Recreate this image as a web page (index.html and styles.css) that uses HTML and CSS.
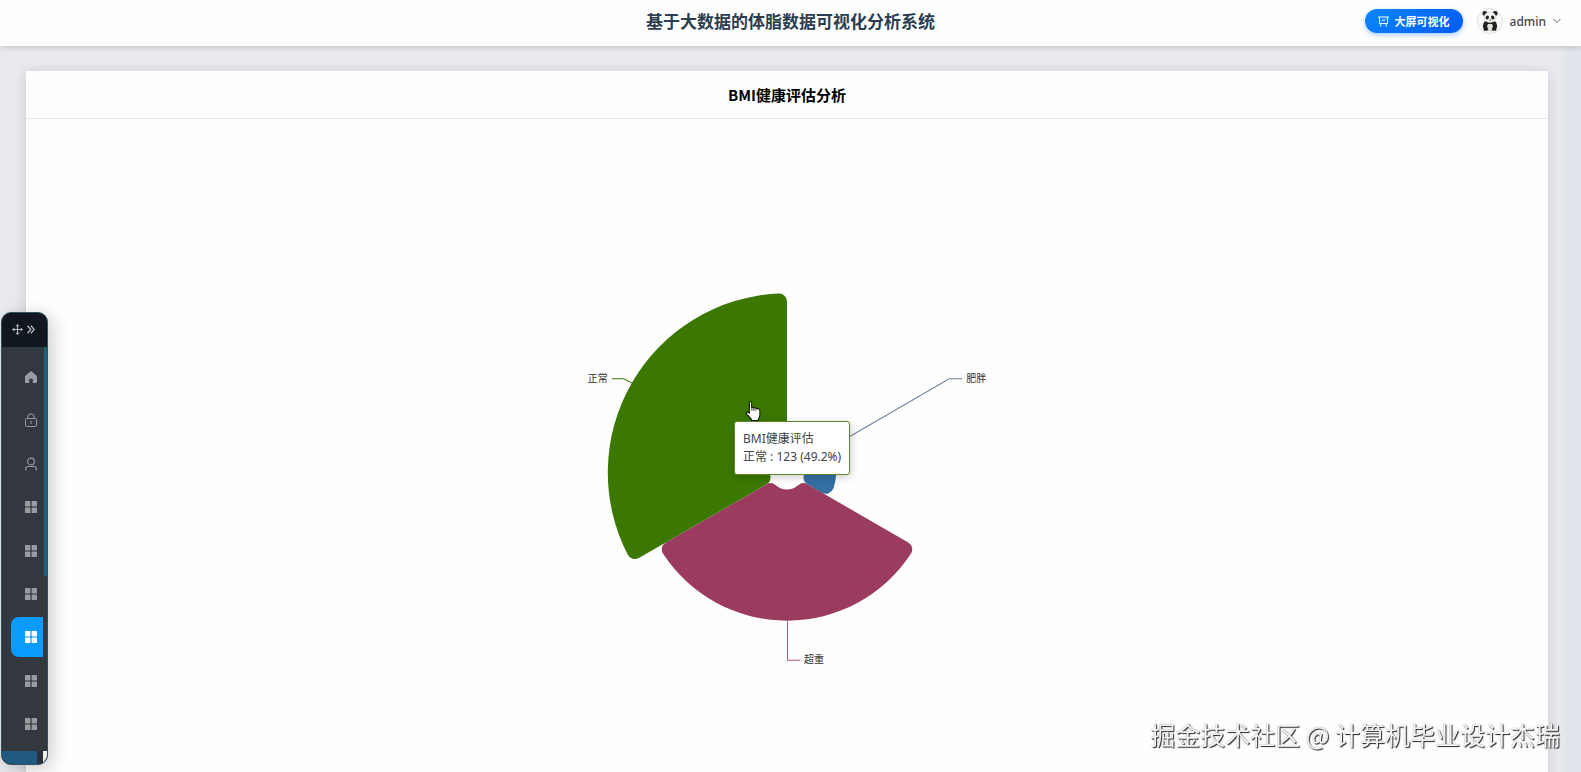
FILE: index.html
```html
<!DOCTYPE html>
<html lang="zh-CN">
<head>
<meta charset="utf-8">
<title>基于大数据的体脂数据可视化分析系统</title>
<link rel="stylesheet" href="styles.css">
</head>
<body>
<svg class="sprite" aria-hidden="true">
  <symbol id="grid" viewBox="0 0 12 12"><path fill="currentColor" d="M.6 0h4.2q.6 0 .6.6v4.2q0 .6-.6.6H.6Q0 5.400 0 4.800V.6Q0 0 .6 0zM7.200 0h4.200q.6 0 .6.6v4.200q0 .6-.6.6H7.200q-.6 0-.6-.6V.6q0-.6.6-.6zM.6 6.600h4.200q.6 0 .6.6v4.200q0 .6-.6.6H.6q-.6 0-.6-.6V7.200q0-.6.6-.6zM7.200 6.600h4.200q.6 0 .6.6v4.200q0 .6-.6.6H7.200q-.6 0-.6-.6V7.200q0-.6.6-.6z"/></symbol>
</svg>
<header class="topbar">
  <h1 class="brand">基于大数据的体脂数据可视化分析系统</h1>
  <div class="tools">
    <button class="screen-btn" type="button">
      <svg width="11" height="11" viewBox="0 0 11 11" fill="none" stroke="currentColor"><path d="M0 1h11M1.500 1v6.500h8V1M3.300 7.500l-1 3M7.700 7.500l1 3M3.500 5l1.500-1.300 1 .8 1.600-1.500"/></svg>
      <span>大屏可视化</span>
    </button>
    <button class="user" type="button">
      <svg class="avatar" width="26" height="26" viewBox="0 0 26 26"><circle cx="13" cy="13" r="12.500" fill="#fbfaf8" stroke="#dedede"/><g fill="#20211f"><circle cx="7.800" cy="5.500" r="2.400"/><circle cx="18.200" cy="5.500" r="2.400"/><path d="M7 14q6-2.500 12 0l1.200 4-1.200 4.800H7L5.800 18z"/></g><ellipse cx="13" cy="9.300" rx="6" ry="5.400" fill="#f5f5f2" stroke="#aaa" stroke-width=".4"/><g fill="#20211f"><ellipse cx="10.300" cy="9.400" rx="1.600" ry="2" transform="rotate(28 10.300 9.400)"/><ellipse cx="15.700" cy="9.400" rx="1.600" ry="2" transform="rotate(-28 15.700 9.400)"/><ellipse cx="13" cy="12" rx=".9" ry=".6"/></g><path fill="#e4e4df" d="M10.800 16h4.400l.8 3-1.300 1.500 1 2.300h-5.400l1-2.300L10 19z"/></svg>
      <span>admin</span>
      <svg width="8" height="6" viewBox="0 0 8 6" fill="none" stroke="#666"><path d="M.5 1L4 4.500 7.500 1"/></svg>
    </button>
  </div>
</header>
<main class="content">
  <section class="panel">
    <h2 class="panel-title">BMI健康评估分析</h2>
    <div class="chart">
      <svg class="rose" viewBox="-400 -353 800 706" role="img" aria-label="BMI健康评估">
        <g fill="none">
          <path stroke="#3d7a04" d="M-154 -89L-163 -93.500H-175"/>
          <path stroke="#6b8095" d="M42 -24L162 -93.500H175"/>
          <path stroke="#a85a76" d="M.5 148V187.500H13"/>
        </g>
        <path fill="#3570a3" d="M0 -40.200A8 8 0 0 1 9.600 -48.100A49 49 0 0 1 46.400 15.800A8 8 0 0 1 34.800 20.100L20.500 11.800A8 8 0 0 1 16.700 3.300A17 17 0 0 0 5.400 -16.100A8 8 0 0 1 0 -23.700Z"/>
        <path fill="#9b3b5f" d="M-20.500 11.800L-121.100 69.900A8 8 0 0 0 -123.700 81.200A148 148 0 0 0 123.700 81.200A8 8 0 0 0 121.100 69.900L20.500 11.800A8 8 0 0 0 11.200 12.800A17 17 0 0 1 -11.200 12.800A8 8 0 0 0 -20.500 11.800Z"/>
        <path fill="#3b7800" d="M-20.500 11.800L-147.900 85.400A8 8 0 0 1 -159 82.100A179 179 0 0 1 -8.400 -178.800A8 8 0 0 1 0 -170.800V-23.700A8 8 0 0 1 -5.400 -16.100A17 17 0 0 0 -16.700 3.300A8 8 0 0 1 -20.500 11.800Z"/>
        <g class="rose-label">
          <text x="-179" y="-90" text-anchor="end">正常</text>
          <text x="179" y="-90">肥胖</text>
          <text x="17" y="190">超重</text>
        </g>
        <path fill="#fff" stroke="#111" stroke-linejoin="round" d="M-37.500 -70.500q1.500-1 2.200.6v5.200q1.200-.8 2 .2q1.400-.6 2.200.4q1.700-.5 2.200.7q1.800-.2 1.800 1.400v4.500q0 2.500-1.500 4v1.500h-7v-1.300l-4.800-5.200q-1-1.700.5-1.900 1.200 0 2.400 1.300z"/>
        <path fill="none" stroke="#111" stroke-width=".8" d="M-35 -65v3.500M-33 -64.500v3M-31 -64v2.500"/>
      </svg>
      <div class="tip">BMI健康评估<br>正常 : 123 (49.2%)</div>
    </div>
  </section>
</main>
<nav class="dock" aria-label="菜单">
  <div class="dock-head">
    <svg width="11" height="11" viewBox="0 0 11 11" fill="none" stroke="currentColor"><path d="M5.500 1v9M1 5.500h9"/><path fill="currentColor" stroke="none" d="M5.500 0l2 2.300h-4zM5.500 11l2-2.300h-4zM0 5.500l2.300-2v4zM11 5.500l-2.300-2v4z"/></svg>
    <svg width="8" height="9" viewBox="0 0 8 9" fill="none" stroke="currentColor" stroke-width="1.300"><path d="M.6.800l3.200 3.700L.6 8.200M4 .8l3.200 3.700L4 8.200"/></svg>
  </div>
  <div class="dock-body">
    <a class="item" href="#" aria-label="首页"><svg viewBox="0 0 12 12"><path fill="currentColor" d="M6 0l5.600 4.800q.4.400.4.900V11q0 1-1 1H7.800V8.300q0-.6-.6-.6H4.800q-.6 0-.6.6V12H1q-1 0-1-1V5.700q0-.5.4-.9z"/></svg></a>
    <a class="item" href="#" aria-label="密码"><svg viewBox="0 0 12 14" fill="none" stroke="currentColor"><rect x=".5" y="5.500" width="11" height="8" rx="1.200"/><path d="M2.800 5.500V4a3.200 3.200 0 0 1 6.400 0v1.500M6 8v3"/></svg></a>
    <a class="item" href="#" aria-label="用户"><svg viewBox="0 0 12 13" fill="none" stroke="currentColor" stroke-width="1.100"><circle cx="6" cy="4" r="3.400"/><path d="M.6 13v-1.300q0-2.700 2.700-2.700h5.400q2.700 0 2.700 2.700V13"/></svg></a>
    <a class="item" href="#" aria-label="菜单一"><svg viewBox="0 0 12 12"><use href="#grid" width="12" height="12"/></svg></a>
    <a class="item" href="#" aria-label="菜单二"><svg viewBox="0 0 12 12"><use href="#grid" width="12" height="12"/></svg></a>
    <a class="item" href="#" aria-label="菜单三"><svg viewBox="0 0 12 12"><use href="#grid" width="12" height="12"/></svg></a>
    <a class="item active" href="#" aria-label="菜单四"><svg viewBox="0 0 12 12"><use href="#grid" width="12" height="12"/></svg></a>
    <a class="item" href="#" aria-label="菜单五"><svg viewBox="0 0 12 12"><use href="#grid" width="12" height="12"/></svg></a>
    <a class="item" href="#" aria-label="菜单六"><svg viewBox="0 0 12 12"><use href="#grid" width="12" height="12"/></svg></a>
    <span class="track"></span>
  </div>
  <div class="dock-foot"><span class="thumb"></span><span class="corner"></span></div>
</nav>
<div class="credit">掘金技术社区 @ 计算机毕业设计杰瑞</div>
</body>
</html>
```
FILE: styles.css
```css
* { box-sizing: border-box; }
html, body { height: 100%; }
body {
  margin: 0;
  overflow: hidden;
  display: flex;
  flex-direction: column;
  background: linear-gradient(to left, #e1e4ea 14px, #e9eaef 20px);
  font-family: "Noto Sans", "Noto Sans CJK SC", sans-serif;
}
button { font: inherit; border: 0; padding: 0; background: none; cursor: pointer; }
.sprite { position: absolute; width: 0; height: 0; }

.topbar {
  flex: none;
  display: grid;
  grid-template-columns: 1fr auto 1fr;
  align-items: center;
  height: 46px;
  padding: 0 20px 4px;
  background: #fefefe;
  box-shadow: 0 1px 6px rgba(0, 0, 0, .18);
}
.brand {
  grid-column: 2;
  margin: 0;
  color: #2c3e50;
  font: bold 17px/24px "Noto Sans CJK SC", sans-serif;
}
.tools { display: flex; justify-content: flex-end; align-items: center; gap: 14px; }
.screen-btn {
  display: flex;
  align-items: center;
  gap: 6px;
  height: 24px;
  padding: 0 13px;
  border-radius: 12px;
  background: linear-gradient(135deg, #0c86fb, #005cf5);
  box-shadow: 0 2px 5px rgba(0, 110, 255, .35);
  color: #fff;
  font: bold 11px/16px "Noto Sans CJK SC", sans-serif;
}
.user { display: flex; align-items: center; gap: 7px; color: #444; font-size: 12px; font-weight: 500; }

.content { flex: 1; min-height: 0; padding: 25px 33px 0 26px; }
.panel { background: #fefefe; box-shadow: 0 2px 12px rgba(0, 0, 0, .14); }
.panel-title {
  margin: 0;
  padding: 12px;
  border-bottom: 1px solid #e2e3e5;
  color: #000;
  text-align: center;
  font: bold 15px/23px "Noto Sans CJK SC", sans-serif;
}
.chart { position: relative; }
.rose { display: block; width: 100%; height: 707px; }
.rose-label { fill: #333; font: 10px "Noto Sans CJK SC", sans-serif; }
.tip {
  position: absolute;
  left: calc(50% - 53px);
  top: 302px;
  padding: 8px;
  border: 1px solid #5d8a2c;
  border-radius: 3px;
  background: #fff;
  box-shadow: 1px 2px 8px rgba(0, 0, 0, .2);
  color: #444;
  font-size: 12px;
  line-height: 18px;
  white-space: nowrap;
}

.dock {
  position: fixed;
  left: 1px;
  top: 312px;
  width: 47px;
  border: 1px solid #34515f;
  border-radius: 10px;
  overflow: hidden;
  background: #33383f;
  box-shadow: 4px 4px 18px rgba(0, 0, 0, .2);
}
.dock-head {
  display: flex;
  align-items: center;
  justify-content: center;
  gap: 4px;
  height: 34px;
  padding: 0 2px 2px 0;
  background: #10171e;
  color: #b4b9bd;
}
.dock-body {
  position: relative;
  display: flex;
  flex-direction: column;
  justify-content: space-between;
  height: 404px;
  padding: 10px 4px 7px 9px;
}
.item {
  display: flex;
  align-items: center;
  justify-content: center;
  height: 40px;
  padding-left: 8px;
  border-radius: 8px 0 0 8px;
  color: #989b9f;
}
.item svg { width: 12px; height: 14px; }
.active { background: #0a9bff; color: #fff; }
.track { position: absolute; right: 0; top: 0; width: 3px; height: 229px; background: #1d6079; }
.dock-foot { display: flex; justify-content: space-between; height: 13px; background: #2b3036; }
.thumb { width: 35px; background: #215a80; }
.corner { width: 4px; background: #eee; }

.credit {
  position: fixed;
  right: 21px;
  bottom: 20px;
  color: #f4f4f4;
  font: 25px/36px "Noto Sans CJK SC", sans-serif;
  text-shadow: 1px 1px 1px #222, 0 0 1px #999;
}
```
